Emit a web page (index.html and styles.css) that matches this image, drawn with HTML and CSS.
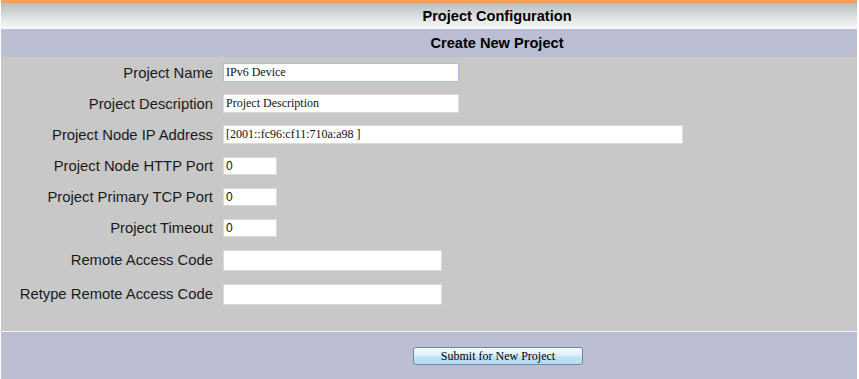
FILE: index.html
```html
<!DOCTYPE html>
<html>
<head>
    <title>Project Configuration</title>
    <link rel="stylesheet" href="styles.css">
</head>
<body>
    <div class="page">
        <div class="title-bar">Project Configuration</div>
        <div class="sub-bar">Create New Project</div>

        <form class="project-form">
            <div class="form-grid">
                <label class="field-label">Project Name</label>
                <div class="field"><input type="text" class="txt txt-wide focused" value="IPv6 Device"></div>

                <label class="field-label">Project Description</label>
                <div class="field"><input type="text" class="txt txt-wide" value="Project Description"></div>

                <label class="field-label">Project Node IP Address</label>
                <div class="field"><input type="text" class="txt txt-ip" value="[2001::fc96:cf11:710a:a98 ]"></div>

                <label class="field-label">Project Node HTTP Port</label>
                <div class="field"><input type="text" class="txt txt-port" value="0"></div>

                <label class="field-label">Project Primary TCP Port</label>
                <div class="field"><input type="text" class="txt txt-port" value="0"></div>

                <label class="field-label">Project Timeout</label>
                <div class="field"><input type="text" class="txt txt-port" value="0"></div>

                <label class="field-label">Remote Access Code</label>
                <div class="field"><input type="password" class="txt txt-code"></div>

                <label class="field-label">Retype Remote Access Code</label>
                <div class="field"><input type="password" class="txt txt-code"></div>
            </div>

            <div class="submit-bar">
                <button type="button" class="submit-btn">Submit for New Project</button>
            </div>
        </form>
    </div>
</body>
</html>
```

FILE: styles.css
```css
body {
    margin: 0;
    background: #ffffff;
    font-family: "Liberation Sans", Arial, sans-serif;
    color: #1a1a1a;
}

.page {
    margin: 0 2px 0 1px;
    background: #c8c8c8;
    height: 379px;
    display: flex;
    flex-direction: column;
}

.title-bar {
    height: 26px;
    border-top: 3px solid #f0a263;
    background: linear-gradient(to bottom, #b8bcbe 0%, #dfe2e3 55%, #f8f9fa 100%);
    font-size: 14.6px;
    font-weight: bold;
    color: #000;
    line-height: 26px;
    text-align: center;
    padding-left: 136px;
}

.sub-bar {
    height: 28px;
    background: #bcbed3;
    font-size: 14.6px;
    font-weight: bold;
    color: #000;
    line-height: 29px;
    text-align: center;
    padding-left: 136px;
}

.project-form {
    flex: 1;
    display: flex;
    flex-direction: column;
    margin: 0;
}

.form-grid {
    display: grid;
    grid-template-columns: 212px 1fr;
    grid-template-rows: repeat(6, 31px) 34px 34px;
    column-gap: 10px;
    padding-bottom: 20px;
}

.field-label {
    display: flex;
    align-items: center;
    justify-content: flex-end;
    font-size: 14.8px;
    color: #1a1a1a;
}

.field {
    display: flex;
    align-items: center;
}

.txt {
    box-sizing: border-box;
    height: 19px;
    margin: 0;
    padding: 0 2px;
    border: 1px solid #dadada;
    background: #ffffff;
    font-family: "Liberation Serif", "Times New Roman", serif;
    font-size: 12px;
    color: #111;
    outline: none;
}

.focused {
    border-color: #a6bfdc;
}

.txt-wide {
    width: 236px;
}

.txt-ip {
    width: 460px;
}

.txt-port {
    width: 54px;
    height: 18px;
    font-family: "Liberation Sans", Arial, sans-serif;
    font-size: 12px;
}

.txt-code {
    width: 219px;
    height: 21px;
}

.submit-bar {
    flex: 1;
    border-top: 1px solid #f2f2f6;
    background: #bcbed3;
    padding: 14px 0 0 412px;
}

.submit-btn {
    width: 170px;
    height: 18px;
    padding: 0;
    border: 1px solid #6c8aa3;
    border-radius: 3px;
    background: linear-gradient(to bottom, #f4fafe 0%, #e0f0fb 45%, #c2e2f6 55%, #b5dcf4 100%);
    font-family: "Liberation Serif", "Times New Roman", serif;
    font-size: 12px;
    color: #000;
    line-height: 16px;
}
```
